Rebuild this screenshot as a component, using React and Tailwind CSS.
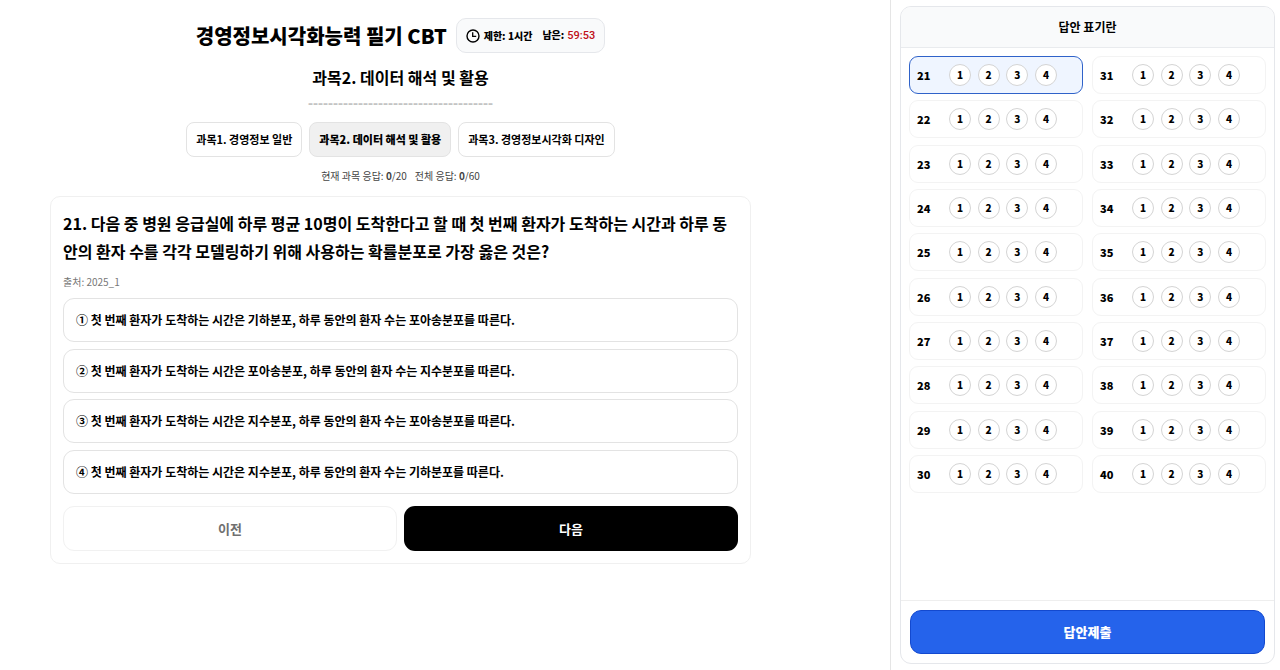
import { useState } from "react";

const subjects = ["과목1. 경영정보 일반", "과목2. 데이터 해석 및 활용", "과목3. 경영정보시각화 디자인"];

const options = [
  "① 첫 번째 환자가 도착하는 시간은 기하분포, 하루 동안의 환자 수는 포아송분포를 따른다.",
  "② 첫 번째 환자가 도착하는 시간은 포아송분포, 하루 동안의 환자 수는 지수분포를 따른다.",
  "③ 첫 번째 환자가 도착하는 시간은 지수분포, 하루 동안의 환자 수는 포아송분포를 따른다.",
  "④ 첫 번째 환자가 도착하는 시간은 지수분포, 하루 동안의 환자 수는 기하분포를 따른다.",
];

const questionNumbers = Array.from({ length: 20 }, (_, i) => 21 + i);

function ClockIcon() {
  return (
    <svg className="size-[14px] shrink-0" viewBox="0 0 14 14" fill="none" stroke="currentColor" aria-hidden="true">
      <circle cx="7" cy="7" r="6" strokeWidth="1.4" />
      <path d="M6.7 3.3V7.4H10.2" strokeWidth="1.3" />
    </svg>
  );
}

function AnswerRow({ number, current }) {
  return (
    <div
      role="group"
      aria-label={`${number}번`}
      className={
        "flex h-[38px] items-center rounded-[9px] border px-[7px] " +
        (current ? "border-[#2f62c9] bg-[#eff5ff]" : "border-[#f3f3f3] bg-white")
      }
    >
      <span className="w-8 text-[11px] leading-4 font-black">{number}</span>
      <div className="flex w-[108px] justify-between">
        {[1, 2, 3, 4].map((n) => (
          <button
            key={n}
            type="button"
            className="flex size-[22px] items-center justify-center rounded-full border border-[#d4d4d4] bg-white text-[10px] leading-4 font-black"
          >
            {n}
          </button>
        ))}
      </div>
    </div>
  );
}

export default function App() {
  const [subject, setSubject] = useState(1);

  return (
    <div className="flex min-h-screen bg-white font-['Noto_Sans_CJK_KR',sans-serif] text-black">
      <main className="min-w-0 flex-1">
        <div className="max-w-[801px] px-[50px] pt-[18px]">
          <header className="flex flex-col items-center">
            <div className="flex items-center gap-[9px]">
              <h1 className="text-[20px] font-black">경영정보시각화능력 필기 CBT</h1>
              <div className="flex h-[35px] items-center rounded-[10px] border border-[#e5e7eb] bg-[#f9fafb] px-[9px] text-[10px] font-black">
                <ClockIcon />
                <span className="ml-1">제한: 1시간</span>
                <span className="ml-[10px] flex items-baseline gap-[3px]">
                  남은: <span className="font-['Roboto',sans-serif] text-[11px] font-medium text-[#c01018]">59:53</span>
                </span>
              </div>
            </div>
            <h2 className="mt-3 text-[16px] leading-6 font-bold">과목2. 데이터 해석 및 활용</h2>
            <div className="mt-1 font-['Liberation_Sans',sans-serif] text-[15px] leading-5 font-bold text-[#c4c4c4]" aria-hidden="true">
              -------------------------------------
            </div>
          </header>

          <nav className="mt-[9px] flex justify-center gap-[7px]">
            {subjects.map((name, i) => (
              <button
                key={name}
                type="button"
                onClick={() => setSubject(i)}
                className={
                  "h-[35px] rounded-[8px] border border-[#e3e3e3] px-[9px] text-[11px] " +
                  (i === subject ? "bg-[#f0f0f0] font-black" : "bg-white font-bold")
                }
              >
                {name}
              </button>
            ))}
          </nav>

          <p className="mt-[10px] flex justify-center gap-2 text-[10px] leading-[18px] text-[#444444]">
            <span>
              현재 과목 응답: <b>0</b>/20
            </span>
            <span>
              전체 응답: <b>0</b>/60
            </span>
          </p>

          <section className="mt-[11px] rounded-[10px] border border-[#f0f0f0] p-3">
            <h3 className="text-[16px] leading-7 font-bold break-all">
              21. 다음 중 병원 응급실에 하루 평균 10명이 도착한다고 할 때 첫 번째 환자가 도착하는 시간과 하루 동안의 환자 수를
              각각 모델링하기 위해 사용하는 확률분포로 가장 옳은 것은?
            </h3>
            <p className="mt-2 text-[10px] leading-[18px] text-[#777777]">출처: 2025_1</p>
            <div className="mt-[7px] grid min-h-[196px] content-between">
              {options.map((text) => (
                <button
                  key={text}
                  type="button"
                  className="h-11 rounded-[11px] border border-[#e3e3e3] bg-white px-3 text-left text-[12px] font-bold"
                >
                  {text}
                </button>
              ))}
            </div>
            <div className="mt-3 grid grid-cols-2 gap-[7px]">
              <button type="button" disabled className="h-[45px] rounded-[11px] border border-[#f1f1f1] bg-white text-[13px] font-bold text-[#707070]">
                이전
              </button>
              <button type="button" className="h-[45px] rounded-[11px] bg-black text-[13px] font-bold text-white">
                다음
              </button>
            </div>
          </section>
        </div>
      </main>

      <aside className="flex w-[390px] shrink-0 flex-col border-l border-[#e5e5e5] pt-[6px] pr-[5px] pb-[6px] pl-[9px]">
        <div className="flex flex-1 flex-col overflow-hidden rounded-[11px] border border-[#e5e7eb]">
          <h2 className="flex h-[41px] items-center justify-center border-b border-[#e9ebee] bg-[#f9fafb] text-[12px] font-bold">
            답안 표기란
          </h2>
          <div className="grid min-h-[453px] grid-flow-col grid-cols-2 grid-rows-[repeat(10,auto)] content-between gap-x-[9px] p-2">
            {questionNumbers.map((n) => (
              <AnswerRow key={n} number={n} current={n === 21} />
            ))}
          </div>
          <div className="mt-auto border-t border-[#eeeeee] p-[9px]">
            <button type="button" className="h-[44px] w-full rounded-[11px] border border-[#1349cf] bg-[#2563eb] text-[13px] font-black text-white">
              답안제출
            </button>
          </div>
        </div>
      </aside>
    </div>
  );
}
